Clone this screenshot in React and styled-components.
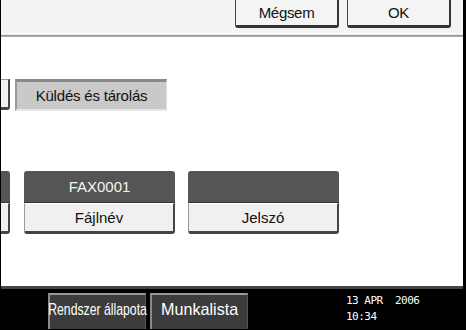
import React from 'react';
import styled, { createGlobalStyle } from 'styled-components';

const GlobalStyle = createGlobalStyle`
  html, body {
    margin: 0;
    padding: 0;
    background: #000;
  }
  body {
    font-family: "Liberation Sans", Arial, sans-serif;
  }
`

const App = () => {
  return (
    <>
      <GlobalStyle />
      <Screen>
        <TopBar>
          <TopButton>Mégsem</TopButton>
          <TopButton>OK</TopButton>
        </TopBar>

        <Main>
          <Row $top={42}>
            <Stub />
            <ToggleButton $gap={5}>Küldés és tárolás</ToggleButton>
          </Row>

          <Row $top={60}>
            <FieldStub>
              <FieldHead />
              <FieldBody />
            </FieldStub>
            <Field $gap={14}>
              <FieldHead>FAX0001</FieldHead>
              <FieldBody>Fájlnév</FieldBody>
            </Field>
            <Field $gap={13}>
              <FieldHead />
              <FieldBody>Jelszó</FieldBody>
            </Field>
          </Row>
        </Main>

        <StatusBar>
          <StatusButton $width={98}>
            <Narrow $scale={0.72}>Rendszer állapota</Narrow>
          </StatusButton>
          <StatusButton $width={98}>
            <Narrow $scale={0.95}>Munkalista</Narrow>
          </StatusButton>
          <Clock>
            <span>13 APR  2006</span>
            <span>10:34</span>
          </Clock>
        </StatusBar>
      </Screen>
    </>
  )
}

export default App;

const Screen = styled.div`
  width: 466px;
  height: 330px;
  display: flex;
  flex-direction: column;
  background: #000;
  overflow: hidden;
`

const TopBar = styled.div`
  height: 33px;
  display: flex;
  justify-content: flex-end;
  align-items: flex-start;
  gap: 8px;
  padding-right: 12px;
  margin-left: 1px;
  margin-right: 3px;
  background: #f3f3f3;
  border-bottom: 1px solid #fff;
  box-shadow: 0 1px 0 #e6e6e6, 0 2px 0 #999, 0 3px 0 #aaa;
  position: relative;
  z-index: 1;
`

const TopButton = styled.div`
  width: 104px;
  height: 28px;
  box-sizing: border-box;
  background: #f4f4f4;
  border: 1px solid #444;
  border-top: none;
  border-right: 2px solid #333;
  border-bottom: 3px solid #333;
  border-radius: 0 0 3px 3px;
  display: flex;
  align-items: center;
  justify-content: center;
  color: #111;
  font-size: 15px;
  letter-spacing: -0.3px;
`

const Main = styled.div`
  flex: 1;
  background: #fff;
  margin-left: 1px;
  margin-right: 3px;
  padding-top: 3px;
  border-bottom: 3px solid #444;
  display: flex;
  flex-direction: column;
`

const Row = styled.div`
  display: flex;
  align-items: flex-start;
  margin-top: ${p => p.$top}px;
`

const Stub = styled.div`
  width: 9px;
  height: 31px;
  box-sizing: border-box;
  background: #f0f0f0;
  border-top: 1px solid #999;
  border-right: 2px solid #444;
  border-bottom: 3px solid #444;
  border-radius: 0 0 3px 0;
`

const ToggleButton = styled.div`
  margin-left: ${p => p.$gap}px;
  width: 152px;
  height: 32px;
  box-sizing: border-box;
  background: #c9c9c9;
  border-top: 3px solid #888;
  border-left: 2px solid #999;
  border-right: 1px solid #ddd;
  border-bottom: 2px solid #e8e8e8;
  display: flex;
  align-items: center;
  justify-content: center;
  color: #111;
  font-size: 15px;
  letter-spacing: -0.2px;
`

const Field = styled.div`
  margin-left: ${p => p.$gap}px;
  width: 151px;
  display: flex;
  flex-direction: column;
`

const FieldStub = styled.div`
  width: 9px;
  display: flex;
  flex-direction: column;
  overflow: hidden;
`

const FieldHead = styled.div`
  height: 32px;
  box-sizing: border-box;
  background: #555;
  border-radius: 3px 3px 0 0;
  border-bottom: 1px solid #333;
  color: #f4f4f4;
  font-size: 15px;
  display: flex;
  align-items: center;
  justify-content: center;

  ${FieldStub} & {
    border-radius: 0 3px 0 0;
  }
`

const FieldBody = styled.div`
  height: 31px;
  box-sizing: border-box;
  background: #f0f0f0;
  border-top: 1px solid #fff;
  border-left: 1px solid #999;
  border-right: 2px solid #444;
  border-bottom: 3px solid #444;
  border-radius: 0 0 3px 3px;
  color: #111;
  font-size: 15px;
  display: flex;
  align-items: center;
  justify-content: center;

  ${FieldStub} & {
    border-left: none;
    border-radius: 0 0 3px 0;
  }
`

const StatusBar = styled.div`
  height: 37px;
  display: flex;
  align-items: flex-start;
  padding-top: 4px;
  padding-left: 48px;
  gap: 4px;
  background: #000;
`

const StatusButton = styled.div`
  width: ${p => p.$width}px;
  height: 36px;
  box-sizing: border-box;
  background: #3c3c3c;
  border-top: 2px solid #9a9a9a;
  border-left: 2px solid #8a8a8a;
  border-right: 1px solid #555;
  color: #fff;
  display: flex;
  align-items: center;
  justify-content: center;
  padding-bottom: 4px;
  font-size: 17px;
  white-space: nowrap;
`

const Narrow = styled.span`
  display: inline-block;
  transform: scaleX(${p => p.$scale});
`

const Clock = styled.div`
  margin-left: 94px;
  margin-top: 1px;
  display: flex;
  flex-direction: column;
  gap: 3px;
  color: #fff;
  font-family: "DejaVu Sans Mono", "Liberation Mono", monospace;
  font-size: 11px;
  line-height: 13px;
  letter-spacing: -0.5px;
  white-space: pre;
`
